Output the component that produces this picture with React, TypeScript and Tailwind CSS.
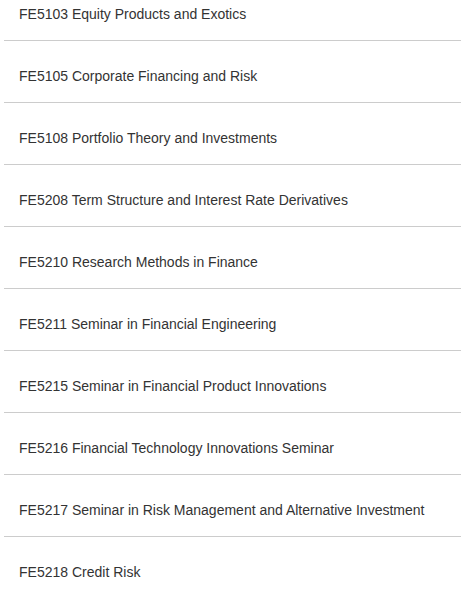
import React from 'react';

const courses = [
  'FE5103 Equity Products and Exotics',
  'FE5105 Corporate Financing and Risk',
  'FE5108 Portfolio Theory and Investments',
  'FE5208 Term Structure and Interest Rate Derivatives',
  'FE5210 Research Methods in Finance',
  'FE5211 Seminar in Financial Engineering',
  'FE5215 Seminar in Financial Product Innovations',
  'FE5216 Financial Technology Innovations Seminar',
  'FE5217 Seminar in Risk Management and Alternative Investment',
  'FE5218 Credit Risk',
];

export default function App() {
  return (
    <div className="w-[461px] h-[592px] overflow-hidden bg-white font-['Liberation_Sans',Arial,sans-serif]">
      <ul className="ml-[4px]">
        {courses.map((c, i) => (
          <li
            key={c}
            className={
              (i === 0 ? 'pt-[4px] pb-[16px] ' : 'pt-[25px] pb-[16px] ') +
              'pl-[15px] text-[14px] leading-[20px] text-[#333333] border-b border-[#cccccc]'
            }
          >
            {c}
          </li>
        ))}
      </ul>
    </div>
  );
}
